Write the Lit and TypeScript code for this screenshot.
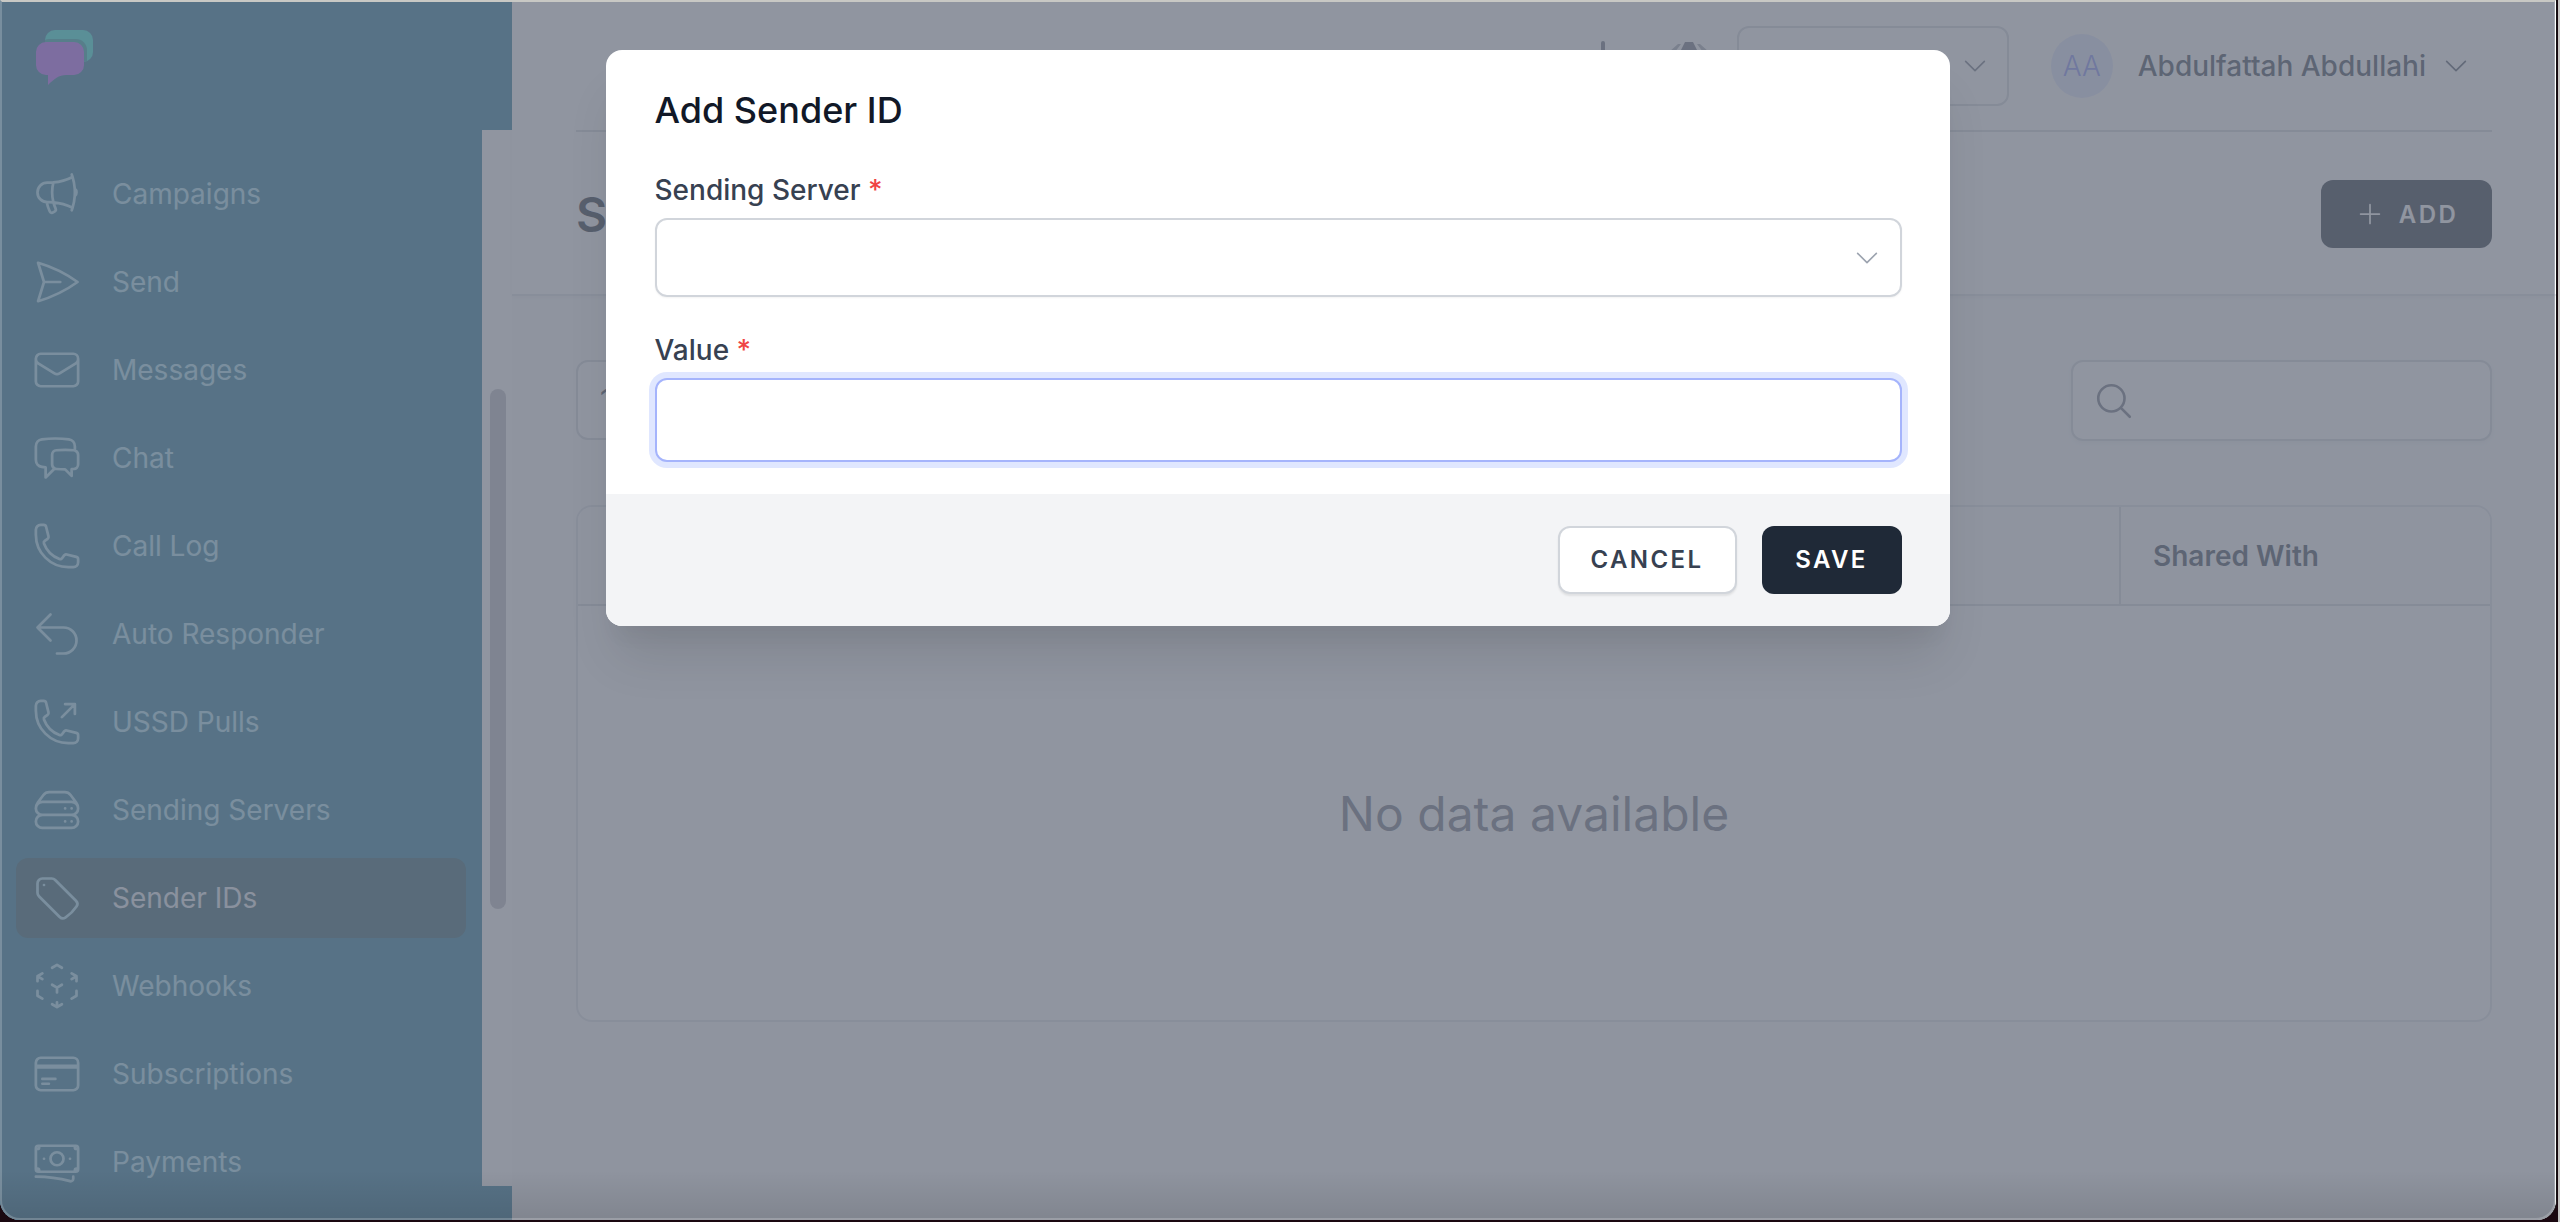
import { LitElement, html, css } from "lit";
import { customElement } from "lit/decorators.js";

const CHEVRON = "m19.5 8.25-7.5 7.5-7.5-7.5";
const PLUS = "M12 4.5v15m7.5-7.5h-15";
const SEARCH = "m21 21-5.197-5.197m0 0A7.5 7.5 0 1 0 5.196 5.196a7.5 7.5 0 0 0 10.607 10.607Z";
const PHONE = "M2.25 6.75c0 8.284 6.716 15 15 15h2.25a2.25 2.25 0 0 0 2.25-2.25v-1.372c0-.516-.351-.966-.852-1.091l-4.423-1.106c-.44-.11-.902.055-1.173.417l-.97 1.293c-.282.376-.769.542-1.21.38a12.035 12.035 0 0 1-7.143-7.143c-.162-.441.004-.928.38-1.21l1.293-.97c.363-.271.527-.734.417-1.173L6.963 3.102a1.125 1.125 0 0 0-1.091-.852H4.5A2.25 2.25 0 0 0 2.25 4.5v2.25Z";

const NAV: { label: string; d: string; active?: boolean }[] = [
  { label: "Campaigns", d: "M10.34 15.84c-.688-.06-1.386-.09-2.09-.09H7.5a4.5 4.5 0 1 1 0-9h.75c.704 0 1.402-.03 2.09-.09m0 9.18c.253.962.584 1.892.985 2.783.247.55.06 1.21-.463 1.511l-.657.38c-.551.318-1.26.117-1.527-.461a20.845 20.845 0 0 1-1.44-4.282m3.102.069a18.03 18.03 0 0 1-.59-4.59c0-1.586.205-3.124.59-4.59m0 9.18a23.848 23.848 0 0 1 8.835 2.535M10.34 6.66a23.847 23.847 0 0 0 8.835-2.535m0 0A23.74 23.74 0 0 0 18.795 3m.38 1.125a23.91 23.91 0 0 1 1.014 5.395m-1.014 8.855c-.118.38-.245.754-.38 1.125m.38-1.125a23.91 23.91 0 0 0 1.014-5.395m0-3.46c.495.413.811 1.035.811 1.73 0 .695-.316 1.317-.811 1.73m0-3.46a24.347 24.347 0 0 1 0 3.46" },
  { label: "Send", d: "M6 12 3.269 3.125A59.769 59.769 0 0 1 21.485 12 59.768 59.768 0 0 1 3.27 20.875L5.999 12Zm0 0h7.5" },
  { label: "Messages", d: "M21.75 6.75v10.5a2.25 2.25 0 0 1-2.25 2.25h-15a2.25 2.25 0 0 1-2.25-2.25V6.75m19.5 0A2.25 2.25 0 0 0 19.5 4.5h-15a2.25 2.25 0 0 0-2.25 2.25m19.5 0v.243a2.25 2.25 0 0 1-1.07 1.916l-7.5 4.615a2.25 2.25 0 0 1-2.36 0L3.32 8.91a2.25 2.25 0 0 1-1.07-1.916V6.75" },
  { label: "Chat", d: "M20.25 8.511c.884.284 1.5 1.128 1.5 2.097v4.286c0 1.136-.847 2.1-1.98 2.193-.34.027-.68.052-1.02.072v3.091l-3-3c-1.354 0-2.694-.055-4.02-.163a2.115 2.115 0 0 1-.825-.242m9.345-8.334a2.126 2.126 0 0 0-.476-.095 48.64 48.64 0 0 0-8.048 0c-1.131.094-1.976 1.057-1.976 2.192v4.286c0 .837.46 1.58 1.155 1.951m9.345-8.334V6.637c0-1.621-1.152-3.026-2.76-3.235A48.455 48.455 0 0 0 11.25 3c-2.115 0-4.198.137-6.24.402-1.608.209-2.76 1.614-2.76 3.235v6.226c0 1.621 1.152 3.026 2.76 3.235.577.075 1.157.14 1.74.194V21l4.155-4.155" },
  { label: "Call Log", d: PHONE },
  { label: "Auto Responder", d: "M9 15 3 9m0 0 6-6M3 9h12a6 6 0 0 1 0 12h-3" },
  { label: "USSD Pulls", d: "M20.25 3.75v4.5m0-4.5h-4.5m4.5 0-6 6m3 12c-8.284 0-15-6.716-15-15V4.5A2.25 2.25 0 0 1 4.5 2.25h1.372c.516 0 .966.351 1.091.852l1.106 4.423c.11.44-.054.902-.417 1.173l-1.293.97a1.062 1.062 0 0 0-.38 1.21 12.035 12.035 0 0 0 7.143 7.143c.441.162.928-.004 1.21-.38l.97-1.293a1.125 1.125 0 0 1 1.173-.417l4.423 1.106c.5.125.852.575.852 1.091V19.5a2.25 2.25 0 0 1-2.25 2.25h-2.25Z" },
  { label: "Sending Servers", d: "M5.25 14.25h13.5m-13.5 0a3 3 0 0 1-3-3m3 3a3 3 0 1 0 0 6h13.5a3 3 0 1 0 0-6m-16.5-3a3 3 0 0 1 3-3h13.5a3 3 0 0 1 3 3m-19.5 0a4.5 4.5 0 0 1 .9-2.7L5.737 5.1a3.375 3.375 0 0 1 2.7-1.35h7.126c1.062 0 2.062.5 2.7 1.35l2.587 3.45a4.5 4.5 0 0 1 .9 2.7m0 0a3 3 0 0 1-3 3m0 3h.008v.008h-.008v-.008Zm0-6h.008v.008h-.008v-.008Zm-3 6h.008v.008h-.008v-.008Zm0-6h.008v.008h-.008v-.008Z" },
  { label: "Sender IDs", active: true, d: "M9.568 3H5.25A2.25 2.25 0 0 0 3 5.25v4.318c0 .597.237 1.17.659 1.591l9.581 9.581c.699.699 1.78.872 2.607.33a18.095 18.095 0 0 0 5.223-5.223c.542-.827.369-1.908-.33-2.607L11.16 3.66A2.25 2.25 0 0 0 9.568 3ZM6 6h.008v.008H6V6Z" },
  { label: "Webhooks", d: "m21 7.5-2.25-1.313M21 7.5v2.25m0-2.25-2.25 1.313M3 7.5l2.25-1.313M3 7.5l2.25 1.313M3 7.5v2.25m9 3 2.25-1.313M12 12.75l-2.25-1.313M12 12.75V15m0 6.75 2.25-1.313M12 21.75V19.5m0 2.25-2.25-1.313m0-16.875L12 2.25l2.25 1.313M21 14.25v2.25l-2.25 1.313m-13.5 0L3 16.5v-2.25" },
  { label: "Subscriptions", d: "M2.25 8.25h19.5M2.25 9h19.5m-16.5 5.25h6m-6 2.25h3m-3.75 3h15a2.25 2.25 0 0 0 2.25-2.25V6.75A2.25 2.25 0 0 0 19.5 4.5h-15a2.25 2.25 0 0 0-2.25 2.25v10.5A2.25 2.25 0 0 0 4.5 19.5Z" },
  { label: "Payments", d: "M2.25 18.75a60.07 60.07 0 0 1 15.797 2.101c.727.198 1.453-.342 1.453-1.096V18.75M3.75 4.5v.75A.75.75 0 0 1 3 6h-.75m0 0v-.375c0-.621.504-1.125 1.125-1.125H20.25M2.25 6v9m18-10.5v.75c0 .414.336.75.75.75h.75m-1.5-1.5h.375c.621 0 1.125.504 1.125 1.125v9.75c0 .621-.504 1.125-1.125 1.125h-.375m1.5-1.5H21a.75.75 0 0 0-.75.75v.75m0 0H3.75m0 0h-.375a1.125 1.125 0 0 1-1.125-1.125V15m1.5 1.5v-.75A.75.75 0 0 0 3 15h-.75M15 10.5a3 3 0 1 1-6 0 3 3 0 0 1 6 0Zm3 0h.008v.008H18V10.5Zm-12 0h.008v.008H6V10.5Z" },
];

const icon = (d: string, cls: string) => html`<svg class=${cls} viewBox="0 0 24 24" fill="none" stroke="currentColor" stroke-linecap="round" stroke-linejoin="round"><path d=${d}></path></svg>`;

@customElement("app-root")
export class AppRoot extends LitElement {
  static styles = css`
    :host { display: block; font-family: Inter, "Noto Sans", sans-serif; }
    * { box-sizing: border-box; }
    .shell { position: relative; height: 1222px; width: 2560px; overflow: hidden; background: linear-gradient(#c4c4c2, #c4c4c2) right top / 2px 100% no-repeat, #1a0810; }
    .window { position: relative; width: 2557px; height: 1220px; display: flex; overflow: hidden; border-radius: 0 0 20px 20px; background: #fff; border-right: 1px solid #111; }

    .sidebar { width: 512px; flex: none; display: flex; flex-direction: column; background: #1f7698; }
    .logo { height: 130px; flex: none; padding: 28px 0 0 35px; }
    .logo svg { display: block; width: 60px; height: 60px; }
    .side-body { flex: 1; min-height: 0; display: flex; }
    .side-foot { height: 34px; flex: none; }
    .nav { flex: 1; min-width: 0; overflow: hidden; padding: 24px 16px 0; display: flex; flex-direction: column; gap: 8px; }
    .item { flex: none; height: 80px; display: flex; align-items: center; gap: 30px; padding-left: 14px; border-radius: 12px; color: #a8e4f6; font-size: 28px; }
    .item.active { background: #245a68; color: #e5eef5; }
    .item.active .ni { color: #a8e4f6; }
    .ni { width: 52px; height: 52px; flex: none; stroke-width: 1.25; transform: translateX(1px); }
    .track { width: 30px; flex: none; background: #fff; padding: 259px 0 0 8px; }
    .thumb { width: 16px; height: 520px; border-radius: 8px; background: #bcbcc4; }

    .main { flex: 1; min-width: 0; display: flex; flex-direction: column; background: #f9fafb; }
    .top { flex: none; background: #fff; padding: 0 64px; border-bottom: 2px solid #e0e2e7; box-shadow: 0 1px 4px rgba(0,0,0,.06); }
    .header { height: 132px; padding-top: 1px; display: flex; align-items: center; justify-content: flex-end; border-bottom: 2px solid #d1d5db; }
    .divider { width: 4px; height: 50px; border-radius: 2px; background: #6b7280; margin-right: 64px; }
    .bell { width: 40px; height: 50px; flex: none; fill: #6b7280; margin-right: 28px; }
    .org { width: 272px; height: 80px; border: 2px solid #d1d5db; border-radius: 12px; display: flex; align-items: center; justify-content: flex-end; padding-right: 17px; color: #6b7280; margin-right: 42px; }
    .chev { width: 30px; height: 30px; stroke-width: 1.3; flex: none; }
    .avatar { width: 62px; height: 64px; border-radius: 50%; background: #e0e7ff; color: #818cf8; font-size: 28px; font-weight: 300; display: flex; align-items: center; justify-content: center; margin-right: 25px; }
    .name { font-size: 28px; font-weight: 500; color: #374151; margin-right: 15px; }
    .user-chev { color: #4b5563; margin-right: 21px; }
    .sub { height: 162px; padding-top: 2px; display: flex; align-items: center; justify-content: space-between; }
    h1 { margin: 0; font-size: 48px; font-weight: 600; color: #1f2937; }
    .add { height: 68px; width: 171px; border-radius: 12px; background: #1f2937; color: #fff; display: flex; align-items: center; justify-content: center; gap: 14px; font-size: 24px; font-weight: 600; letter-spacing: 2.4px; }
    .plus { width: 30px; height: 30px; stroke-width: 1.4; }

    .content { flex: 1; padding: 64px 64px 0; display: flex; flex-direction: column; }
    .filters { display: flex; justify-content: space-between; height: 80px; flex: none; }
    .per { width: 160px; height: 80px; border: 2px solid #d1d5db; border-radius: 12px; background: #fff; display: flex; align-items: center; padding-left: 22px; font-size: 28px; color: #374151; }
    .search { width: 421px; height: 81px; border: 2px solid #d1d5db; border-radius: 12px; background: #fff; box-shadow: 0 2px 4px rgba(0,0,0,.05); display: flex; align-items: center; padding-left: 20px; color: #6b7280; }
    .sicon { width: 42px; height: 42px; stroke-width: 1.5; }
    .table { margin-top: 65px; height: 517px; flex: none; border: 2px solid #e0e2e7; border-radius: 16px; background: #fff; display: flex; flex-direction: column; overflow: hidden; }
    .thead { height: 99px; flex: none; display: flex; background: #f9fafb; border-bottom: 2px solid #d1d5db; }
    .th { flex: 1; }
    .th.last { flex: none; width: 371px; border-left: 2px solid #d1d5db; padding-left: 32px; display: flex; align-items: center; font-size: 28px; font-weight: 600; color: #374151; }
    .empty { flex: 1; display: flex; align-items: center; justify-content: center; font-size: 48px; color: #6b7280; }

    .overlay { position: absolute; inset: 0 1px 0 0; background: rgba(107,114,128,.75); }
    .vignette { position: absolute; left: 0; right: 0; bottom: 0; height: 50px; background: linear-gradient(rgba(0,0,0,0), rgba(0,0,0,.1)); }
    .frame { position: absolute; inset: 0; border: 2px solid rgba(255,255,255,.2); border-top-color: #c8c8c4; border-radius: 0 0 20px 20px; pointer-events: none; }

    .modal-wrap { position: absolute; inset: 50px 1px auto 0; display: flex; justify-content: center; }
    .modal { width: 1344px; background: #fff; border-radius: 16px; overflow: hidden; box-shadow: 0 40px 50px -10px rgba(0,0,0,.1), 0 20px 20px -10px rgba(0,0,0,.04); }
    .form { padding: 32px 48px 32px 49px; display: flex; flex-direction: column; }
    h2 { margin: 0 0 32px; font-size: 36px; line-height: 56px; font-weight: 500; color: #111827; }
    label { display: block; font-size: 28px; line-height: 40px; font-weight: 500; color: #374151; }
    .req { color: #ef4444; }
    .select { margin-top: 8px; height: 79px; border: 2px solid #d1d5db; border-radius: 12px; display: flex; align-items: center; justify-content: flex-end; padding-right: 18px; color: #9ca3af; box-shadow: 0 1px 2px rgba(0,0,0,.05); }
    .select .chev { width: 30px; height: 30px; }
    .field2 { margin-top: 33px; }
    input { display: block; width: 100%; margin-top: 8px; height: 84px; border: 2px solid #a5b4fc; border-radius: 12px; box-shadow: 0 0 0 6px #e0e7ff; outline: none; background: #fff; }
    .footer { height: 132px; background: #f3f4f6; padding: 32px 48px; display: flex; justify-content: flex-end; gap: 25px; }
    button { height: 68px; border-radius: 12px; font-family: inherit; font-size: 24px; font-weight: 600; letter-spacing: 2.4px; cursor: pointer; padding: 0 0 2px; }
    .cancel { width: 179px; background: #fff; border: 2px solid #d1d5db; color: #374151; box-shadow: 0 2px 2px rgba(0,0,0,.08); }
    .save { width: 140px; background: #1f2937; border: none; color: #fff; }
  `;

  render() {
    return html`
      <div class="shell">
        <div class="window">
          <aside class="sidebar">
            <div class="logo">
              <svg viewBox="0 0 60 60">
                <defs><clipPath id="tealclip"><path d="M20 2h28a10 10 0 0 1 10 10v12a10 10 0 0 1-10 10H20a10 10 0 0 1-10-10V12A10 10 0 0 1 20 2Z"></path></clipPath></defs>
                <path d="M20 2h28a10 10 0 0 1 10 10v12a10 10 0 0 1-10 10H20a10 10 0 0 1-10-10V12A10 10 0 0 1 20 2Z" fill="#28e6dc"></path>
                <g clip-path="url(#tealclip)"><rect x="3" y="11" width="49" height="36" rx="11" fill="#1fa4a8"></rect></g>
                <path d="M11 14h28a10 10 0 0 1 10 10v13a10 10 0 0 1-10 10h-8c-7 0-12 4-18 10V47h-2A10 10 0 0 1 1 37V24a10 10 0 0 1 10-10Z" fill="#b462ff"></path>
              </svg>
            </div>
            <div class="side-body">
              <nav class="nav">
                ${NAV.map((n) => html`<div class="item ${n.active ? "active" : ""}">${icon(n.d, "ni")}<span>${n.label}</span></div>`)}
              </nav>
              <div class="track"><div class="thumb"></div></div>
            </div>
            <div class="side-foot"></div>
          </aside>
          <main class="main">
            <div class="top">
              <div class="header">
                <div class="divider"></div>
                <svg class="bell" viewBox="0 0 40 50"><path d="M16 1h8l5 10H11Z"></path><path d="M9 3 0 11h6l6-8Z" opacity=".6"></path><path d="M31 3l9 8h-6l-6-8Z" opacity=".6"></path></svg>
                <div class="org">${icon(CHEVRON, "chev")}</div>
                <div class="avatar">AA</div>
                <span class="name">Abdulfattah Abdullahi</span>
                ${icon(CHEVRON, "chev user-chev")}
              </div>
              <div class="sub">
                <h1>Sender IDs</h1>
                <div class="add">${icon(PLUS, "plus")}<span>ADD</span></div>
              </div>
            </div>
            <div class="content">
              <div class="filters">
                <div class="per">10</div>
                <div class="search">${icon(SEARCH, "sicon")}</div>
              </div>
              <div class="table">
                <div class="thead"><div class="th"></div><div class="th last">Shared With</div></div>
                <div class="empty">No data available</div>
              </div>
            </div>
          </main>
          <div class="overlay"></div>
          <div class="vignette"></div>
          <div class="frame"></div>
          <div class="modal-wrap">
            <div class="modal">
              <div class="form">
                <h2>Add Sender ID</h2>
                <div>
                  <label>Sending Server <span class="req">*</span></label>
                  <div class="select">${icon(CHEVRON, "chev")}</div>
                </div>
                <div class="field2">
                  <label>Value <span class="req">*</span></label>
                  <input type="text" />
                </div>
              </div>
              <div class="footer">
                <button class="cancel">CANCEL</button>
                <button class="save">SAVE</button>
              </div>
            </div>
          </div>
        </div>
      </div>
    `;
  }
}
